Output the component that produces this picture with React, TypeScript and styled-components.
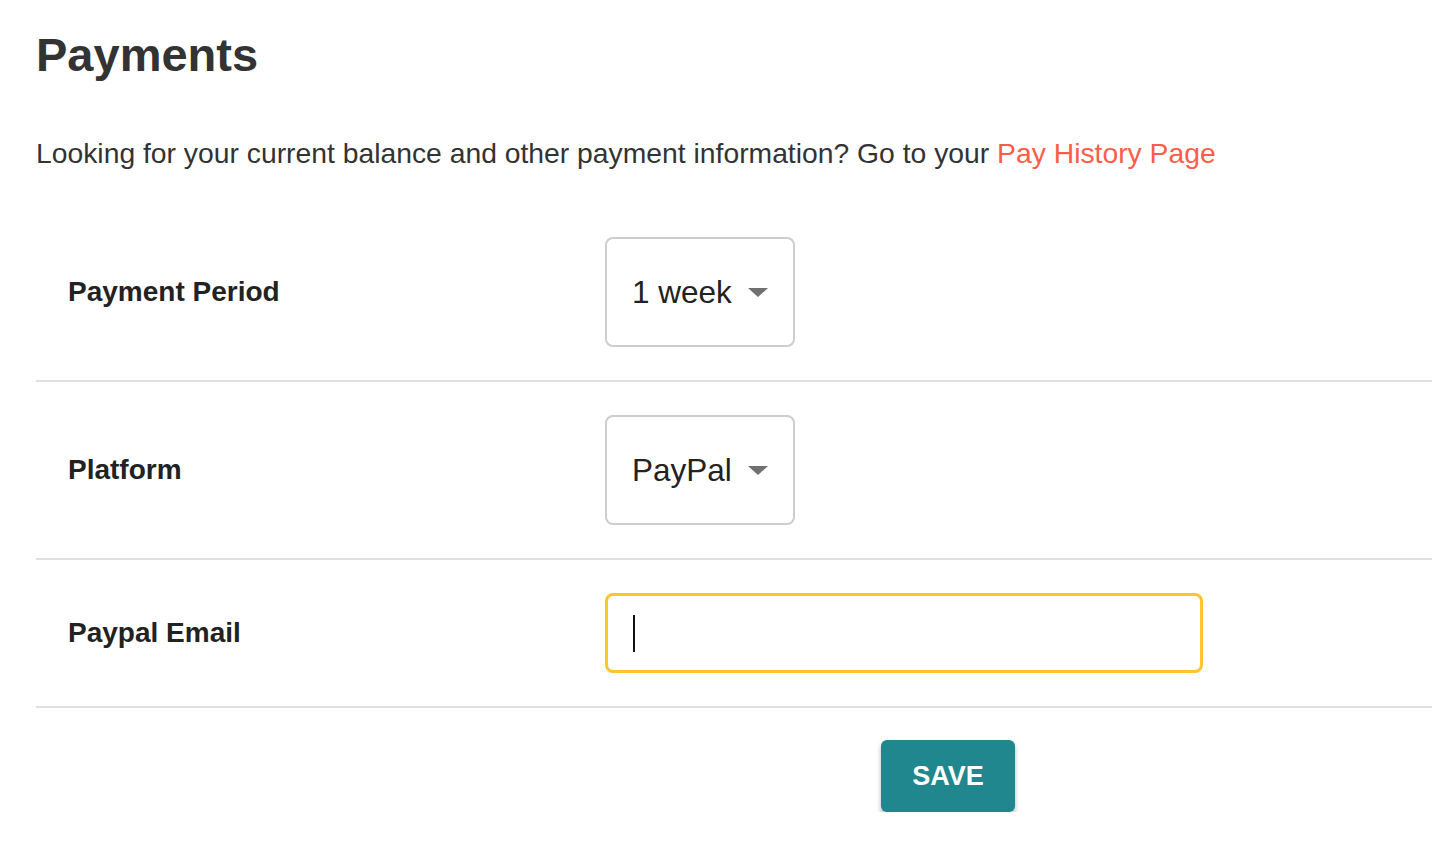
import React from "react";
import styled, { createGlobalStyle } from "styled-components";

const GlobalStyle = createGlobalStyle`
  html, body {
    margin: 0;
    padding: 0;
    background: #fff;
    font-family: "Liberation Sans", Arial, sans-serif;
    color: #333;
  }
`;

const Page = styled.div`
  padding: 26px 0 0 36px;
`;

const Title = styled.h1`
  margin: 0;
  font-size: 47px;
  font-weight: 700;
  line-height: 58px;
  color: #333;
`;

const Intro = styled.p`
  margin: 51px 0 0;
  font-size: 28.3px;
  line-height: 36px;
  color: #333;
`;

const Link = styled.a`
  color: #fb5d4a;
  text-decoration: none;
  cursor: pointer;
`;

const Form = styled.div`
  margin-top: 33px;
`;

const Row = styled.div`
  display: grid;
  grid-template-columns: 569px 1fr;
  align-items: center;
  padding: 33px 0;
  border-bottom: 2px solid #e0e0e0;
`;

const Label = styled.label`
  padding-left: 32px;
  font-size: 28px;
  font-weight: 700;
  color: #222;
`;

const SelectBox = styled.div`
  display: inline-flex;
  align-items: center;
  gap: 16px;
  height: 110px;
  box-sizing: border-box;
  padding: 0 25px 0 25px;
  border: 2px solid #cdcdcd;
  border-radius: 8px;
  font-size: 31.5px;
  color: #222;
  justify-self: start;
`;

const Caret = styled.span`
  width: 0;
  height: 0;
  border-left: 10px solid transparent;
  border-right: 10px solid transparent;
  border-top: 9px solid #707070;
`;

const EmailInput = styled.div`
  width: 598px;
  height: 80px;
  box-sizing: border-box;
  border: 3px solid #fdc52c;
  border-radius: 8px;
  display: flex;
  align-items: center;
  padding-left: 25px;
`;

const Cursor = styled.span`
  width: 2px;
  height: 37px;
  background: #111;
`;

const Actions = styled.div`
  display: flex;
  padding: 32px 0 0 845px;
`;

const SaveButton = styled.button`
  width: 134px;
  height: 72px;
  border: none;
  border-radius: 6px;
  background: #20878e;
  color: #fff;
  font-family: "Liberation Sans", Arial, sans-serif;
  font-size: 27px;
  font-weight: 700;
  box-shadow: 0 3px 5px rgba(0, 0, 0, 0.3);
  cursor: pointer;
`;

function Select({ value }: { value: string }) {
  return (
    <SelectBox>
      {value}
      <Caret />
    </SelectBox>
  );
}

export default function App() {
  return (
    <Page>
      <GlobalStyle />
      <Title>Payments</Title>
      <Intro>
        Looking for your current balance and other payment information? Go to
        your <Link>Pay History Page</Link>
      </Intro>
      <Form>
        <Row>
          <Label>Payment Period</Label>
          <Select value="1 week" />
        </Row>
        <Row>
          <Label>Platform</Label>
          <Select value="PayPal" />
        </Row>
        <Row>
          <Label>Paypal Email</Label>
          <EmailInput>
            <Cursor />
          </EmailInput>
        </Row>
        <Actions>
          <SaveButton>SAVE</SaveButton>
        </Actions>
      </Form>
    </Page>
  );
}
